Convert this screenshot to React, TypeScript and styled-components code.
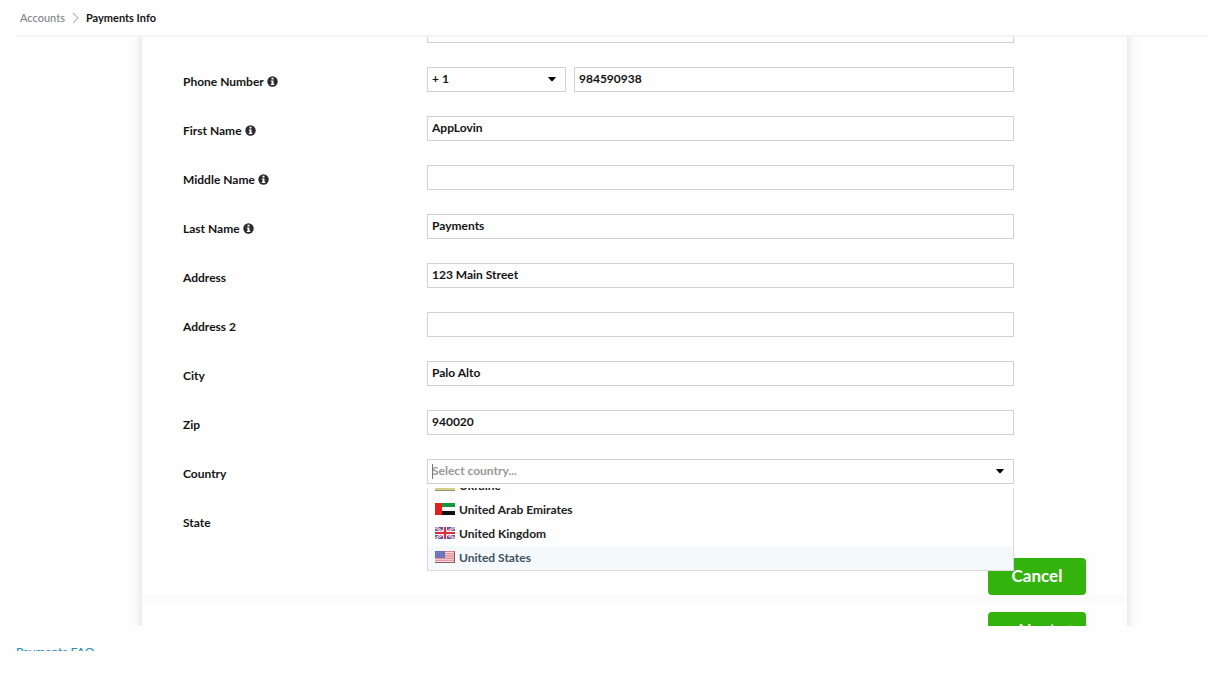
import React, { useLayoutEffect, useRef } from 'react';
import styled, { createGlobalStyle, css } from 'styled-components';

const GlobalStyle = createGlobalStyle`
  * { box-sizing: border-box; }
  body {
    margin: 0;
    background: #fefefe;
    color: #151515;
    font-family: Lato, "Liberation Sans", sans-serif;
    font-size: 12px;
    font-weight: 700;
  }
  input, button, select { font: inherit; color: inherit; }
`;

const Page = styled.div`
  display: flex;
  flex-direction: column;
  min-height: 100vh;
`;

const Breadcrumb = styled.nav`
  display: flex;
  align-items: center;
  gap: 7px;
  height: 37px;
  margin-left: 16px;
  padding: 0 4px;
  border-bottom: 2px solid #f3f5f5;
  font-size: 11px;
  line-height: 16px;
`;

const CrumbLink = styled.a`
  color: #82878d;
  font-weight: 500;
  text-decoration: none;
`;

const Viewport = styled.main`
  height: calc(100vh - 95px);
  overflow: hidden;
  padding: 0 81px 0 142px;
`;

const Card = styled.div`
  padding-bottom: 24px;
  background: #fefefe;
  box-shadow: 0 0 10px 1px rgba(0, 0, 0, 0.13);
`;

const Form = styled.form`
  display: flex;
  flex-direction: column;
  gap: 24px;
  padding: 24px 113px 0 41px;
`;

const Field = styled.div`
  display: grid;
  grid-template-columns: 244px minmax(0, 1fr);
  min-height: 25px;
`;

const Label = styled.label`
  display: flex;
  align-items: center;
  gap: 3px;
  padding-top: 4px;
  line-height: 18px;
`;

const Controls = styled.div`
  position: relative;
  display: flex;
  gap: 8px;
`;

const boxStyle = css`
  width: 100%;
  min-width: 0;
  height: 25px;
  padding: 0 4px 2px;
  border: 1px solid #d2d2d2;
  border-radius: 0;
  background: transparent;
  outline: none;
`;

const TextBox = styled.input`
  ${boxStyle}
  &::placeholder { color: #999; opacity: 1; }
`;

const SelectBox = styled.select`
  ${boxStyle}
  appearance: none;
`;

const Combo = styled.div<{ $width: string }>`
  position: relative;
  display: flex;
  flex: 0 0 ${(p) => p.$width};
`;

const ComboArrow = styled.svg`
  position: absolute;
  top: 10px;
  right: 10px;
  pointer-events: none;
`;

const Caret = styled.span`
  position: absolute;
  top: 5px;
  left: 5px;
  width: 1px;
  height: 15px;
  background: #777;
`;

const Menu = styled.ul`
  position: absolute;
  z-index: 2;
  top: 29px;
  left: 0;
  right: 0;
  height: 83px;
  margin: 0;
  padding: 0;
  overflow: hidden;
  list-style: none;
  background: #fefefe;
  border: solid #d8dadb;
  border-width: 0 1px 1px;
`;

const Option = styled.li<{ $active?: boolean }>`
  display: flex;
  align-items: center;
  gap: 4px;
  height: 24px;
  padding: 0 7px;
  line-height: 24px;
  color: ${(p) => (p.$active ? '#40525f' : '#222')};
  background: ${(p) => (p.$active ? '#f4f9fc' : 'transparent')};
  svg { flex: none; margin-bottom: 3px; }
`;

const Actions = styled.div<{ $gap: number }>`
  display: flex;
  justify-content: flex-end;
  padding: ${(p) => p.$gap}px 41px 0 0;
`;

const Divider = styled.div`
  height: 8px;
  background: #fbfbfb;
`;

const GreenButton = styled.button`
  position: relative;
  width: 98px;
  height: 37px;
  padding: 0 0 2px;
  border: 0;
  border-radius: 4px;
  background: #34b30c;
  color: #fff;
  font-size: 17px;
`;

const NextArrow = styled.svg`
  position: absolute;
  top: 13px;
  right: 10px;
`;

const Footer = styled.footer`
  height: 25px;
  padding: 18px 16px 0;
  overflow: hidden;
`;

const FooterLink = styled.a`
  display: block;
  color: #2a8dbd;
  font-weight: 500;
  line-height: 16px;
  text-decoration: none;
`;

const InfoIcon = () => (
  <svg width="11" height="11" viewBox="0 0 11 11" aria-hidden="true">
    <circle cx="5.5" cy="5.5" r="5.2" fill="#2a2a2a" />
    <path d="M4.5 1.8h2v1.6h-2zM3.8 4.4h2.7v3.4h.8v1.2H3.8V7.8h.8V5.6h-.8z" fill="#fff" />
  </svg>
);

const Arrow = () => (
  <ComboArrow width="8" height="5" viewBox="0 0 8 5" aria-hidden="true">
    <path d="M0.5 0h7q.6 0 .2.6L4.6 4q-.6.6-1.2 0L.3.6Q0 0 .5 0z" fill="#000" />
  </ComboArrow>
);

const FlagUA = () => (
  <svg width="20" height="12" viewBox="0 0 20 12" aria-hidden="true">
    <path fill="#4a7fc0" d="M0 0h20v6H0z" />
    <path fill="#d8cf8a" d="M0 6h20v5H0z" />
    <path fill="#9a9570" d="M0 11h20v1H0z" />
  </svg>
);

const FlagAE = () => (
  <svg width="20" height="12" viewBox="0 0 20 12" aria-hidden="true">
    <path fill="#149a3c" d="M0 0h20v4H0z" />
    <path fill="#f7f7f7" d="M0 4h20v4H0z" />
    <path fill="#111" d="M0 8h20v4H0z" />
    <path fill="#e3201b" d="M0 0h7v12H0z" />
  </svg>
);

const FlagGB = () => (
  <svg width="20" height="12" viewBox="0 0 20 12" aria-hidden="true">
    <path fill="#5060a8" d="M0 0h20v12H0z" />
    <path d="M0 0l20 12M20 0L0 12" stroke="#f1e6ee" strokeWidth="2.4" />
    <path d="M0 0l20 12M20 0L0 12" stroke="#d8566a" strokeWidth="0.9" />
    <path d="M10 0v12M0 6h20" stroke="#f6eef2" strokeWidth="4" />
    <path d="M10 0v12M0 6h20" stroke="#d5303f" strokeWidth="2.2" />
  </svg>
);

const FlagUS = () => (
  <svg width="20" height="12" viewBox="0 0 20 12" aria-hidden="true">
    <path fill="#f6dcdf" d="M0 0h20v12H0z" />
    <path d="M0 .5h20M0 2.7h20M0 4.9h20M0 7.1h20M0 9.3h20M0 11.5h20" stroke="#e08088" strokeWidth="1.1" />
    <path d="M0 11.5h20M19.5 0v12" stroke="#8a5a64" strokeWidth="1" />
    <path fill="#6a70b4" d="M0 0h10v7H0z" />
    <path d="M1 1.6h8M1 3.4h8M1 5.2h8" stroke="#8d92cb" strokeWidth=".6" strokeDasharray="1 1" />
  </svg>
);

const countries = [
  { name: 'Ukraine', Flag: FlagUA },
  { name: 'United Arab Emirates', Flag: FlagAE },
  { name: 'United Kingdom', Flag: FlagGB },
  { name: 'United States', Flag: FlagUS },
];

const nameFields = [
  { id: 'first', label: 'First Name', value: 'AppLovin', info: true },
  { id: 'middle', label: 'Middle Name', value: '', info: true },
  { id: 'last', label: 'Last Name', value: 'Payments', info: true },
  { id: 'address', label: 'Address', value: '123 Main Street' },
  { id: 'address2', label: 'Address 2', value: '' },
  { id: 'city', label: 'City', value: 'Palo Alto' },
  { id: 'zip', label: 'Zip', value: '940020' },
];

export default function App() {
  const viewport = useRef<HTMLElement>(null);
  const menu = useRef<HTMLUListElement>(null);

  // Open scrolled down to the contact fields, with the end of the country list in view.
  useLayoutEffect(() => {
    if (viewport.current) viewport.current.scrollTop = 43;
    if (menu.current) menu.current.scrollTop = menu.current.scrollHeight;
  }, []);

  return (
    <Page>
      <GlobalStyle />
      <Breadcrumb aria-label="Breadcrumb">
        <CrumbLink href="#accounts">Accounts</CrumbLink>
        <svg width="7" height="12" viewBox="0 0 7 12" aria-hidden="true">
          <path d="M1 1l5 5-5 5" fill="none" stroke="#b8bcc0" strokeWidth="1.2" />
        </svg>
        <span>Payments Info</span>
      </Breadcrumb>
      <Viewport ref={viewport}>
        <Card>
          <Form>
            <Field>
              <span />
              <Controls>
                <TextBox aria-label="Email" defaultValue="" />
              </Controls>
            </Field>
            <Field>
              <Label htmlFor="phone">Phone Number <InfoIcon /></Label>
              <Controls>
                <Combo $width="139px">
                  <SelectBox aria-label="Country code" defaultValue="1">
                    <option value="1">+ 1</option>
                  </SelectBox>
                  <Arrow />
                </Combo>
                <TextBox id="phone" defaultValue="984590938" />
              </Controls>
            </Field>
            {nameFields.map((f) => (
              <Field key={f.id}>
                <Label htmlFor={f.id}>{f.label} {f.info && <InfoIcon />}</Label>
                <Controls>
                  <TextBox id={f.id} defaultValue={f.value} />
                </Controls>
              </Field>
            ))}
            <Field>
              <Label htmlFor="country">Country</Label>
              <Controls>
                <Combo $width="100%">
                  <TextBox id="country" role="combobox" aria-expanded="true" placeholder="Select country..." />
                  <Caret />
                  <Arrow />
                </Combo>
                <Menu ref={menu} role="listbox" aria-label="Countries">
                  {countries.map(({ name, Flag }) => (
                    <Option key={name} role="option" $active={name === 'United States'}>
                      <Flag />
                      {name}
                    </Option>
                  ))}
                </Menu>
              </Controls>
            </Field>
            <Field>
              <Label as="span">State</Label>
            </Field>
          </Form>
          <Actions $gap={25}><GreenButton type="button">Cancel</GreenButton></Actions>
          <Divider />
          <Actions $gap={9}>
            <GreenButton type="button">
              Next
              <NextArrow width="8" height="12" viewBox="0 0 8 12" aria-hidden="true">
                <path d="M1.5 1l5 5-5 5" fill="none" stroke="#fff" strokeWidth="2" />
              </NextArrow>
            </GreenButton>
          </Actions>
        </Card>
      </Viewport>
      <Footer>
        <FooterLink href="#faq">Payments FAQ</FooterLink>
      </Footer>
    </Page>
  );
}
